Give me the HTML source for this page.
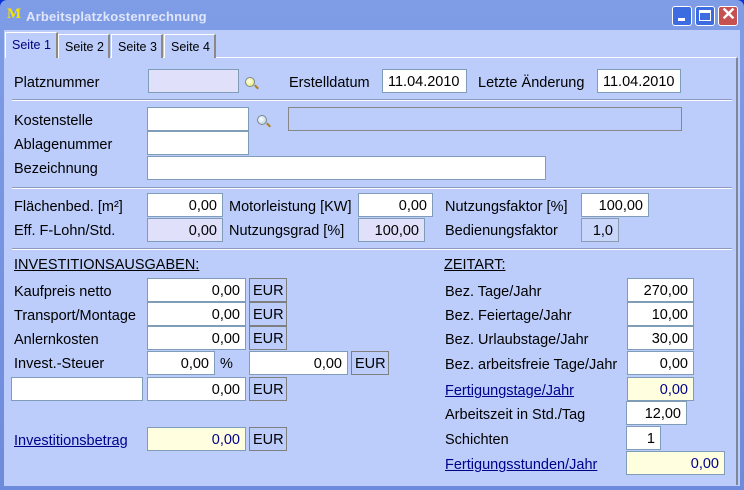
<!DOCTYPE html>
<html><head><meta charset="utf-8"><style>
*{box-sizing:border-box;margin:0;padding:0}
body{width:744px;height:490px;overflow:hidden;background:#0831d9;font-family:"Liberation Sans",sans-serif;font-size:14.5px;color:#000;position:relative}
.win{position:absolute;left:0;top:0;width:744px;height:490px;background:linear-gradient(#7f9ce6,#6d8bdc);border-radius:7px 7px 0 0}
.title{position:absolute;left:26px;top:9px;color:#dfe6fb;font-weight:bold;font-size:13px;letter-spacing:0.2px}
.logo{position:absolute;left:7px;top:6px;color:#f5e300;font-weight:bold;font-family:"Liberation Serif",serif;font-size:15px}
.btn{position:absolute;top:6px;width:20px;height:20px;border:1px solid #fff;border-radius:3px;background:#3d6be0}
.client{position:absolute;left:4px;top:30px;width:736px;height:456px;background:#bccdfb}
.panel{position:absolute;left:5px;top:57px;width:733px;height:428px;border-top:1px solid #fff;border-right:2px solid #7d8795}
.tab{position:absolute;top:34px;height:24px;border:1px solid #fff;border-right:2px solid #8c8a80;border-bottom:none;font-size:12.5px;padding:5px 0 0 6px;background:#bccdfb}
.l{position:absolute;white-space:nowrap;margin-top:3px}
.in{position:absolute;height:24px;background:#fff;border:1px solid #7f9db9;text-align:right;padding:4px 5px 0 0;white-space:nowrap;font-size:14.5px}
.lav{background:#e0e0fb}
.yel{background:#ffffdf;color:#00008b}
.eur{position:absolute;width:38px;height:24px;border:1px solid #7f7f7f;padding:4px 0 0 3px;background:#bccdfb}
.sep{position:absolute;left:12px;width:720px;height:2px;border-top:1px solid #8b9bbd;border-bottom:1px solid #fff}
.lnk{color:#00008b;text-decoration:underline}
.mag{position:absolute;width:10px;height:10px;border-radius:50%;border:1px solid #7a8a8a;background:radial-gradient(circle at 40% 40%,#fff,#e8e840)}
.mag:after{content:"";position:absolute;left:8px;top:8px;width:5px;height:2px;background:#b08020;transform:rotate(45deg)}
</style></head><body>
<div class="win"></div>
<div class="logo">M</div><div class="title">Arbeitsplatzkostenrechnung</div>
<div class="btn" style="left:672px"><div style="position:absolute;left:5px;top:11px;width:7px;height:3px;background:#fff"></div></div>
<div class="btn" style="left:695px"><div style="position:absolute;left:3px;top:3px;width:12px;height:11px;border:1px solid #fff;border-top-width:3px"></div></div>
<div class="btn" style="left:718px;background:#c75050"><div style="position:absolute;left:2px;top:-3px;color:#fff;font-size:18px;font-weight:bold">✕</div></div>
<div class="client"></div>
<div class="panel"></div>
<div class="tab" style="left:5px;top:32px;width:53px;height:26px;color:#000080;border-bottom:none">Seite 1</div>
<div class="tab" style="left:58px;width:52px">Seite 2</div>
<div class="tab" style="left:111px;width:52px">Seite 3</div>
<div class="tab" style="left:164px;width:52px">Seite 4</div>

<div class="l" style="left:14px;top:72px">Platznummer</div>
<div class="in lav" style="left:148px;top:69px;width:91px"></div>
<div class="mag" style="left:245px;top:77px"></div>
<div class="l" style="left:289px;top:72px">Erstelldatum</div>
<div class="in" style="left:382px;top:69px;width:85px;text-align:left;padding-left:5px">11.04.2010</div>
<div class="l" style="left:478px;top:72px">Letzte Änderung</div>
<div class="in" style="left:597px;top:69px;width:84px;text-align:left;padding-left:5px">11.04.2010</div>
<div class="sep" style="top:99px"></div>

<div class="l" style="left:14px;top:110px">Kostenstelle</div>
<div class="in" style="left:147px;top:107px;width:102px"></div>
<div class="mag" style="left:257px;top:115px;background:radial-gradient(circle at 40% 40%,#fff,#a8c8e0)"></div>
<div class="in" style="left:288px;top:107px;width:394px;background:#bccdfb;border-color:#888"></div>
<div class="l" style="left:14px;top:134px">Ablagenummer</div>
<div class="in" style="left:147px;top:131px;width:102px"></div>
<div class="l" style="left:14px;top:158px">Bezeichnung</div>
<div class="in" style="left:147px;top:156px;width:399px"></div>
<div class="sep" style="top:187px"></div>

<div class="l" style="left:14px;top:196px">Flächenbed. [m²]</div>
<div class="in" style="left:147px;top:193px;width:76px">0,00</div>
<div class="l" style="left:229px;top:196px">Motorleistung [KW]</div>
<div class="in" style="left:358px;top:193px;width:75px">0,00</div>
<div class="l" style="left:445px;top:196px">Nutzungsfaktor [%]</div>
<div class="in" style="left:581px;top:193px;width:68px">100,00</div>
<div class="l" style="left:14px;top:220px">Eff. F-Lohn/Std.</div>
<div class="in lav" style="left:147px;top:218px;width:76px">0,00</div>
<div class="l" style="left:229px;top:220px">Nutzungsgrad [%]</div>
<div class="in lav" style="left:358px;top:218px;width:67px">100,00</div>
<div class="l" style="left:445px;top:220px">Bedienungsfaktor</div>
<div class="in" style="left:581px;top:218px;width:38px;background:#c8d6fb;border-color:#8a9ab0">1,0</div>
<div class="sep" style="top:248px"></div>

<div class="l" style="left:14px;top:254px;text-decoration:underline">INVESTITIONSAUSGABEN:</div>
<div class="l" style="left:444px;top:254px;text-decoration:underline">ZEITART:</div>

<div class="l" style="left:14px;top:281px">Kaufpreis netto</div>
<div class="in" style="left:147px;top:278px;width:99px">0,00</div><div class="eur" style="left:249px;top:278px">EUR</div>
<div class="l" style="left:14px;top:305px">Transport/Montage</div>
<div class="in" style="left:147px;top:302px;width:99px">0,00</div><div class="eur" style="left:249px;top:302px">EUR</div>
<div class="l" style="left:14px;top:329px">Anlernkosten</div>
<div class="in" style="left:147px;top:326px;width:99px">0,00</div><div class="eur" style="left:249px;top:326px">EUR</div>
<div class="l" style="left:14px;top:353px">Invest.-Steuer</div>
<div class="in" style="left:147px;top:351px;width:68px">0,00</div>
<div class="l" style="left:220px;top:353px">%</div>
<div class="in" style="left:249px;top:351px;width:99px">0,00</div><div class="eur" style="left:351px;top:351px">EUR</div>
<div class="in" style="left:11px;top:377px;width:132px"></div>
<div class="in" style="left:147px;top:377px;width:99px">0,00</div><div class="eur" style="left:249px;top:377px">EUR</div>
<div class="l lnk" style="left:14px;top:430px">Investitionsbetrag</div>
<div class="in yel" style="left:147px;top:427px;width:99px">0,00</div><div class="eur" style="left:249px;top:427px">EUR</div>

<div class="l" style="left:445px;top:281px">Bez. Tage/Jahr</div>
<div class="in" style="left:627px;top:278px;width:67px">270,00</div>
<div class="l" style="left:445px;top:305px">Bez. Feiertage/Jahr</div>
<div class="in" style="left:627px;top:302px;width:67px">10,00</div>
<div class="l" style="left:445px;top:329px">Bez. Urlaubstage/Jahr</div>
<div class="in" style="left:627px;top:326px;width:67px">30,00</div>
<div class="l" style="left:445px;top:354px">Bez. arbeitsfreie Tage/Jahr</div>
<div class="in" style="left:627px;top:351px;width:67px">0,00</div>
<div class="l lnk" style="left:445px;top:380px">Fertigungstage/Jahr</div>
<div class="in yel" style="left:627px;top:377px;width:67px">0,00</div>
<div class="l" style="left:445px;top:404px">Arbeitszeit in Std./Tag</div>
<div class="in" style="left:626px;top:401px;width:61px">12,00</div>
<div class="l" style="left:445px;top:429px">Schichten</div>
<div class="in" style="left:626px;top:426px;width:35px">1</div>
<div class="l lnk" style="left:445px;top:454px">Fertigungsstunden/Jahr</div>
<div class="in yel" style="left:626px;top:451px;width:99px">0,00</div>
</body></html>
